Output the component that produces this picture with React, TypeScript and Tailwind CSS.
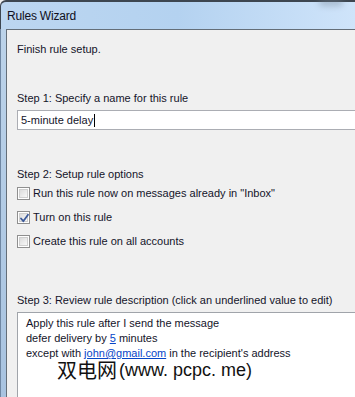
import React from "react";

function Checkbox({ checked }: { checked?: boolean }) {
  return (
    <div className="relative w-[13px] h-[13px] border border-[#8f8f8f] bg-white p-[1px] shrink-0">
      <div className="w-full h-full bg-gradient-to-br from-[#dcdcdc] to-[#f8f8f8] border border-[#cfcfcf]" />
      {checked && (
        <svg className="absolute left-[1px] top-[1px]" width="11" height="11" viewBox="0 0 11 11">
          <path d="M2 5.5 L4.3 8.2 L9 1.8" fill="none" stroke="#3c5a9a" strokeWidth="1.8" strokeLinecap="round" strokeLinejoin="round" />
        </svg>
      )}
    </div>
  );
}

export default function App() {
  const font = { fontFamily: '"Liberation Sans", Arial, sans-serif' };
  return (
    <div
      className="relative w-[355px] h-[397px] overflow-hidden bg-[#f0f0f0] text-[#14142a] flex flex-col"
      style={font}
    >
      {/* title bar */}
      <div className="relative h-[29px] shrink-0 rounded-tl-[6px] border-t-[2px] border-l border-[#3d4650] bg-gradient-to-r from-[#bcd6f0] via-[#b4d2f0] to-[#cfe4fa] flex items-center pl-[6px]">
        <span className="text-[12px] text-[#101020] tracking-[-0.2px]">Rules Wizard</span>
        <div className="absolute right-[12px] top-[-4px] w-[24px] h-[8px] rounded-full bg-[#6f7f90] opacity-40 blur-[3px]" />
      </div>
      <div className="flex flex-1 min-h-0">
        {/* left frame */}
        <div className="w-[6px] shrink-0 border-l border-[#6f87a3] bg-gradient-to-b from-[#bcd3ea] to-[#a8c3e0]" />
        {/* panel */}
        <div className="flex-1 min-w-0 border-l border-t border-[#646e78] bg-[#f0f0f0] pl-[10px] text-[11px]">
          <div className="pt-[11px] h-[61px]">Finish rule setup.</div>
          <div className="leading-[15px]">Step 1: Specify a name for this rule</div>
          <div className="mt-[4px] h-[20px] border-t border-b border-l border-[#abadb3] bg-white flex items-center pl-[3px] -mr-[4px]">
            <span>5-minute delay</span>
            <span className="inline-block w-[1px] h-[13px] bg-black ml-[1px]" />
          </div>
          <div className="mt-[37px] leading-[15px]">Step 2: Setup rule options</div>
          <div className="mt-[4px] flex flex-col gap-[10px]">
            <div className="flex items-center gap-[3px] h-[14px]">
              <Checkbox />
              <span>Run this rule now on messages already in "Inbox"</span>
            </div>
            <div className="flex items-center gap-[3px] h-[14px]">
              <Checkbox checked />
              <span>Turn on this rule</span>
            </div>
            <div className="flex items-center gap-[3px] h-[14px]">
              <Checkbox />
              <span>Create this rule on all accounts</span>
            </div>
          </div>
          <div className="mt-[45px] leading-[15px]">Step 3: Review rule description (click an underlined value to edit)</div>
          <div className="mt-[4px] h-[120px] border-t border-l border-[#a0a4aa] bg-white pl-[8px] pt-[3px] leading-[15px] -mr-[4px]">
            <div>Apply this rule after I send the message</div>
            <div>
              defer delivery by <span className="text-[#0645c8] underline">5</span> minutes
            </div>
            <div>
              except with <span className="text-[#0645c8] underline">john@gmail.com</span> in the recipient's address
            </div>
          </div>
        </div>
      </div>
      {/* watermark */}
      <div
        className="absolute left-[57px] top-[361px] leading-[18px] text-[#111] flex items-center whitespace-nowrap"
        style={{ textShadow: "0 0 2px #fff, 0 0 2px #fff, 0 0 3px #fff" }}
      >
        <span className="text-[20px] leading-[18px]" style={{ fontFamily: '"Noto Sans CJK SC", sans-serif', fontWeight: 400 }}>
          双电网
        </span>
        <span className="text-[18px] leading-[18px] ml-[2px]" style={{ fontFamily: '"Liberation Sans", Arial, sans-serif' }}>
          (www. pcpc. me)
        </span>
      </div>
    </div>
  );
}
